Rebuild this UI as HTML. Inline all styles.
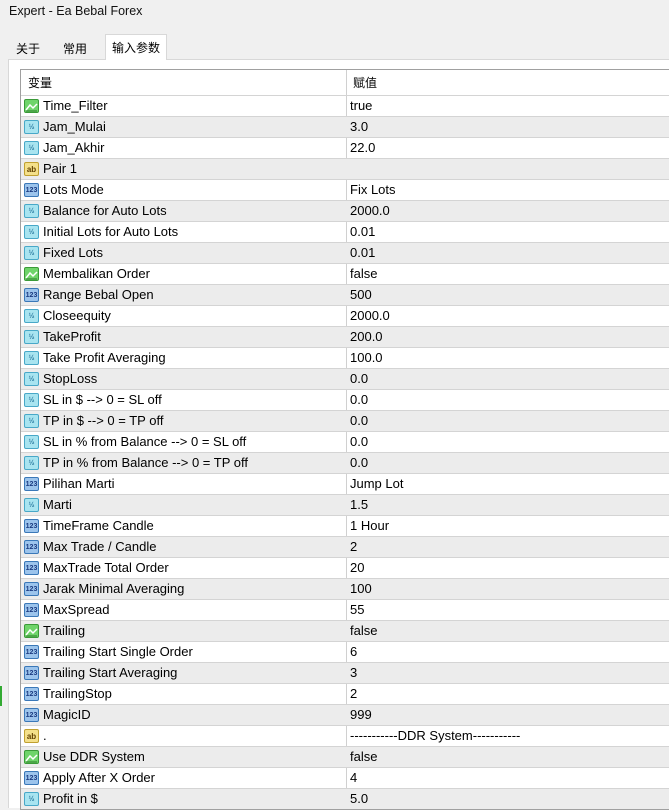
<!DOCTYPE html>
<html><head><meta charset="utf-8"><style>
*{margin:0;padding:0;box-sizing:border-box}
body{width:669px;height:808px;overflow:hidden;background:#f0f0f0;font-family:"Liberation Sans","Noto Sans CJK SC",sans-serif;font-size:13px;color:#000;position:relative}
.title{position:absolute;left:9px;top:4px;font-size:12.5px;color:#111}
.tab{position:absolute;top:36px;height:23px;padding:4px 0 0 6px;font-family:"Noto Sans CJK SC",sans-serif;font-size:12px}
.panel{position:absolute;left:8px;top:59px;right:0;bottom:0;background:#fff;border-left:1px solid #d8d8d8;border-top:1px solid #d8d8d8}
.tbl{position:absolute;left:20px;top:69px;right:-2px;bottom:-2px;border:1px solid #a0a0a0;border-right:none;background:#fff}
.hdr{height:25px;position:relative;font-family:"Noto Sans CJK SC",sans-serif;font-size:12px}
.hdr span{position:absolute;top:4px}
.row{height:21px;position:relative;border-top:1px solid #d4d4d4;white-space:nowrap}
.row:nth-child(2n){background:#ececec}
.row .n{position:absolute;left:22px;top:2px}
.row .v{position:absolute;left:329px;top:2px}
.col{position:absolute;left:325px;top:0;bottom:0;border-left:1px solid #d0d0d0}
.ic{position:absolute;left:3px;top:3px;width:15px;height:14px;border-radius:2px;font-size:7px;font-weight:bold;text-align:center;line-height:13px}
.b{background:#6fd46a;border:1px solid #3a9a38}
.d{background:#a8e4f0;border:1px solid #48a8c8;color:#2a7aa0}
.s{background:#f4e08a;border:1px solid #c0a030;color:#604000;font-size:8px}
.i{background:#9cc4ec;border:1px solid #3a78b8;color:#1a3a80}
</style></head><body>
<div class="title">Expert - Ea Bebal Forex</div>
<div class="tab" style="left:10px">关于</div>
<div class="tab" style="left:57px">常用</div>
<div class="tab" style="left:105px;top:34px;height:26px;width:62px;background:#fff;border:1px solid #d8d8d8;border-bottom:none;z-index:2">输入参数</div>
<div class="panel"></div>
<div class="tbl">
<div class="col"></div>
<div class="hdr"><span style="left:7px">变量</span><span style="left:332px">赋值</span></div>
<div id="rows"></div>
</div>
<div style="position:absolute;left:0;top:686px;width:2px;height:20px;background:#3a3"></div>
<script>
var r=[["b","Time_Filter","true"],["d","Jam_Mulai","3.0"],["d","Jam_Akhir","22.0"],["s","Pair 1",""],["i","Lots Mode","Fix Lots"],["d","Balance for Auto Lots","2000.0"],["d","Initial Lots for Auto Lots","0.01"],["d","Fixed Lots","0.01"],["b","Membalikan Order","false"],["i","Range Bebal Open","500"],["d","Closeequity","2000.0"],["d","TakeProfit","200.0"],["d","Take Profit Averaging","100.0"],["d","StopLoss","0.0"],["d","SL in $ --> 0 = SL off","0.0"],["d","TP in $ --> 0 = TP off","0.0"],["d","SL in % from Balance --> 0 = SL off","0.0"],["d","TP in % from Balance --> 0 = TP off","0.0"],["i","Pilihan Marti","Jump Lot"],["d","Marti","1.5"],["i","TimeFrame Candle","1 Hour"],["i","Max Trade / Candle","2"],["i","MaxTrade Total Order","20"],["i","Jarak Minimal Averaging","100"],["i","MaxSpread","55"],["b","Trailing","false"],["i","Trailing Start Single Order","6"],["i","Trailing Start Averaging","3"],["i","TrailingStop","2"],["i","MagicID","999"],["s",".","-----------DDR System-----------"],["b","Use DDR System","false"],["i","Apply After X Order","4"],["d","Profit in $","5.0"]];
var lab={b:"<svg width='13' height='12'><path d='M1 10 L5 5 L8 8 L12 4' stroke='#fff' stroke-width='1.5' fill='none'/><path d='M1 11H12' stroke='#2a7a28'/></svg>",d:"½",s:"ab",i:"123"};
var h="";r.forEach(function(x){h+="<div class='row'><div class='ic "+x[0]+"'>"+lab[x[0]]+"</div><span class='n'>"+x[1]+"</span><span class='v'>"+x[2]+"</span></div>"});
document.getElementById("rows").innerHTML=h;
</script>
</body></html>
